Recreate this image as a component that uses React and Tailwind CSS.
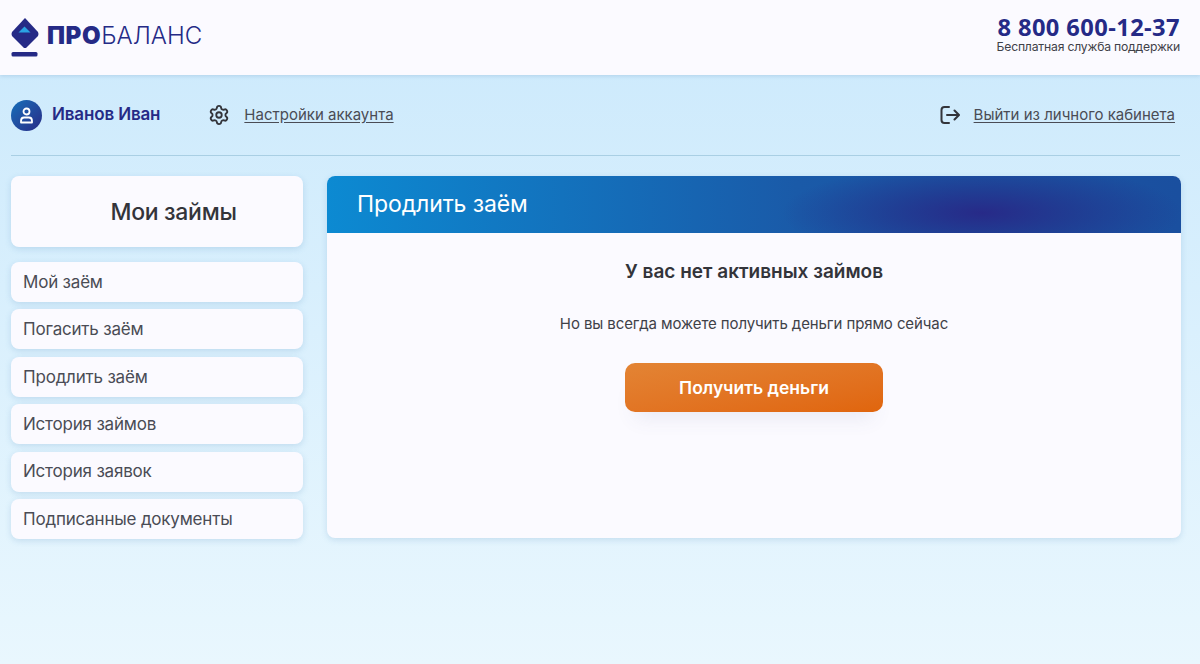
import { Settings } from "lucide-react";

const menu = [
  "Мой заём",
  "Погасить заём",
  "Продлить заём",
  "История займов",
  "История заявок",
  "Подписанные документы",
];

function Logo() {
  return (
    <div className="flex items-center gap-[8px]">
      <svg width="28" height="40" viewBox="0 0 28 40">
        <path d="M14 0 L27 14 Q28 16 27 18 L15 30 L13 30 L1 18 Q0 16 1 14 Z" fill="#252a86" />
        <path d="M13.500 8.500 L19.500 14.500 L7.500 14.500 Z" fill="#2aa3e3" />
        <rect x="0.500" y="34" width="26" height="4.500" rx="1.500" fill="#252a86" />
      </svg>
      <div className="text-[24px] leading-none text-[#252a86] mt-[-4px]">
        <span className="font-black tracking-[0.6px]">ПРО</span>
        <span className="font-light">БАЛАНС</span>
      </div>
    </div>
  );
}

function ExitIcon() {
  return (
    <svg width="20" height="20" viewBox="0 0 20 20" fill="none" stroke="#33343a" strokeWidth="2" strokeLinecap="round" strokeLinejoin="round">
      <path d="M9 2 H4.500 Q1.500 2 1.500 5 V15 Q1.500 18 4.500 18 H9" />
      <path d="M7 10 H18.500 M14.500 5.500 L19 10 L14.500 14.500" />
    </svg>
  );
}

export default function App() {
  return (
    <div
      className="min-h-[664px] h-[664px] overflow-hidden bg-gradient-to-b from-[#cbe9fc] to-[#e9f7fe] text-[#3a3a40]"
      style={{ fontFamily: "Inter, 'Noto Sans', sans-serif" }}
    >
      <header className="h-[75px] bg-[#fbfaff] flex items-center justify-between pl-[11px] pr-[20px] shadow-[0_1px_4px_rgba(60,110,160,0.2)]">
        <Logo />
        <div className="flex flex-col items-end mt-[-8px]">
          <div
            className="text-[23.700px] leading-[26px] font-bold text-[#252a86] tracking-[0.4px]"
            style={{ fontFamily: "'Open Sans', sans-serif" }}
          >
            8 800 600-12-37
          </div>
          <div className="text-[12.200px] leading-[13px] text-[#3f4148] tracking-[-0.2px]">
            Бесплатная служба поддержки
          </div>
        </div>
      </header>

      <div className="ml-[11px] mr-[20px] h-[81px] border-b border-[#a9cfe4] flex items-center justify-between">
        <div className="flex items-center">
          <div className="w-[31px] h-[31px] rounded-full bg-gradient-to-br from-[#0e6fba] to-[#252a86] flex items-center justify-center">
            <svg width="15" height="17" viewBox="0 0 15 17" fill="none" stroke="#fff" strokeWidth="1.800">
              <circle cx="7.500" cy="4.500" r="3" />
              <path d="M2 15.500 V14 Q2 10.500 5 10.500 H10 Q13 10.500 13 14 V15.500 Z" strokeLinejoin="round" />
            </svg>
          </div>
          <div className="ml-[10px] text-[17px] font-semibold text-[#252a86] tracking-[-0.15px]">Иванов Иван</div>
          <Settings className="ml-[48px] text-[#33343a]" size={22} strokeWidth={2} />
          <a className="ml-[14px] text-[15px] underline underline-offset-2 text-[#4a4c55]">Настройки аккаунта</a>
        </div>
        <div className="flex items-center pr-[5px]">
          <ExitIcon />
          <a className="ml-[14px] text-[15px] underline underline-offset-2 text-[#4a4c55]">Выйти из личного кабинета</a>
        </div>
      </div>

      <div className="flex gap-[24px] pl-[11px] pr-[19px] pt-[20px] items-start">
        <aside className="w-[292px] flex flex-col gap-[7.400px]">
          <div className="h-[71px] mb-[7.600px] pt-[1px] bg-[#fbfaff] rounded-[8px] shadow-[0_2px_6px_rgba(70,130,180,0.2)] flex items-center justify-center pl-[33px] text-[23px] font-medium text-[#33343a] tracking-[-0.3px]">
            Мои займы
          </div>
          {menu.map((item) => (
            <div
              key={item}
              className="h-[40px] pt-[1px] bg-[#fbfaff] rounded-[8px] shadow-[0_2px_6px_rgba(70,130,180,0.2)] flex items-center px-[12px] text-[17px] text-[#4a4c55] tracking-[-0.2px]"
            >
              {item}
            </div>
          ))}
        </aside>

        <main className="flex-1 h-[362px] bg-[#fbfaff] rounded-[8px] shadow-[0_2px_6px_rgba(70,130,180,0.2)] overflow-hidden">
          <div
            className="h-[57px] flex items-center pl-[30px] text-[23px] text-white tracking-[-0.1px]"
            style={{
              background:
                "radial-gradient(ellipse 200px 50px at 655px 37px, #272a88 0%, rgba(37,42,134,0.55) 45%, rgba(37,42,134,0) 100%), linear-gradient(90deg, #0c8ad2 0%, #1a5aa8 55%, #1a4f9f 100%)",
            }}
          >
            Продлить заём
          </div>
          <div className="flex flex-col items-center">
            <div className="mt-[27px] text-[19px] leading-[24px] font-semibold text-[#33343a]">У вас нет активных займов</div>
            <div className="mt-[30px] text-[15px] leading-[20px] text-[#3f4148] tracking-[-0.1px]">Но вы всегда можете получить деньги прямо сейчас</div>
            <button className="mt-[29px] pt-[1px] w-[258px] h-[49px] rounded-[10px] bg-gradient-to-br from-[#e38434] to-[#e0650c] text-white text-[17.500px] font-semibold shadow-[0_16px_20px_-10px_rgba(80,90,140,0.1)]">
              Получить деньги
            </button>
          </div>
        </main>
      </div>
    </div>
  );
}
